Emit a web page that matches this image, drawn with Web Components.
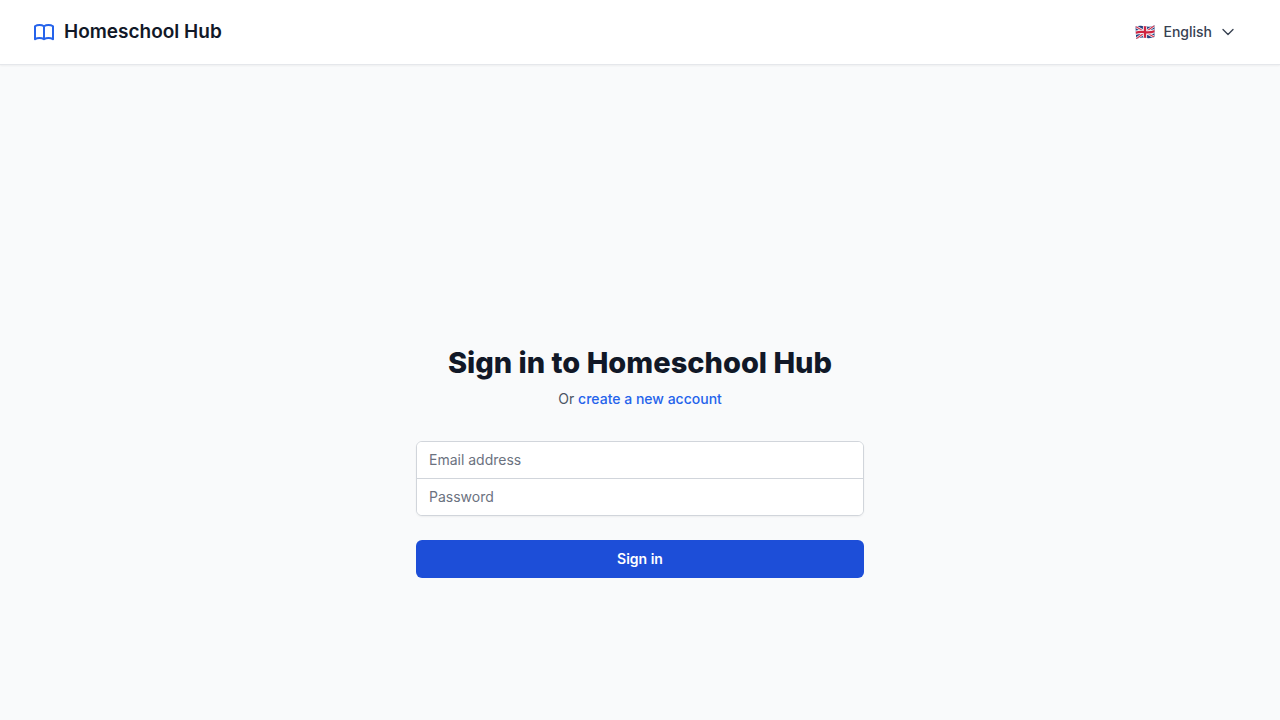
<!DOCTYPE html>
<html lang="en">
<head>
<meta charset="utf-8">
<meta name="viewport" content="width=device-width, initial-scale=1">
<title>Homeschool Hub</title>
<style>
  body { margin: 0; background: #f9fafb; color: #111827; font-family: Inter, "Liberation Sans", sans-serif; font-size: 14px; line-height: 20px; }
</style>
</head>
<body>
<hub-page>
  <hub-header slot="header">
    <hub-brand>Homeschool Hub</hub-brand>
    <language-picker slot="actions">English</language-picker>
  </hub-header>
  <sign-in-panel></sign-in-panel>
</hub-page>

<script>
function define(name, html) {
  const template = document.createElement('template');
  template.innerHTML = html;
  customElements.define(name, class extends HTMLElement {
    constructor() {
      super();
      this.attachShadow({ mode: 'open' }).append(template.content.cloneNode(true));
    }
  });
}

define('hub-page', `
  <style>
    :host { display: flex; flex-direction: column; min-height: 100vh; }
    main { flex: 1; display: flex; flex-direction: column; align-items: center; justify-content: flex-end; padding: 48px 32px 142px; }
  </style>
  <slot name="header"></slot>
  <main><slot></slot></main>
`);

define('hub-header', `
  <style>
    :host { display: block; background: #fff; border-bottom: 1px solid #e5e7eb; box-shadow: 0 1px 2px rgb(0 0 0 / .05); }
    header { display: flex; align-items: center; justify-content: space-between; height: 64px; padding: 0 32px; }
  </style>
  <header><slot></slot><slot name="actions"></slot></header>
`);

define('hub-brand', `
  <style>
    :host { display: block; }
    a { display: flex; align-items: center; gap: 8px; color: #111827; font-size: 19px; line-height: 28px; font-weight: 600; text-decoration: none; }
    svg { width: 24px; height: 24px; color: #2563eb; }
  </style>
  <a href="#"><svg viewBox="0 0 24 24" fill="none" stroke="currentColor" stroke-width="2" stroke-linecap="round" stroke-linejoin="round" aria-hidden="true"><path d="M12 6.253v13m0-13C10.832 5.477 9.246 5 7.5 5S4.168 5.477 3 6.253v13C4.168 18.477 5.754 18 7.5 18s3.332.477 4.5 1.253m0-13C13.168 5.477 14.754 5 16.5 5c1.747 0 3.332.477 4.5 1.253v13C19.832 18.477 18.247 18 16.5 18c-1.746 0-3.332.477-4.5 1.253"/></svg><span><slot></slot></span></a>
`);

define('language-picker', `
  <style>
    :host { display: block; }
    button { display: flex; align-items: center; gap: 8px; margin: 0; padding: 8px 12px; border: 0; border-radius: 6px; background: none; color: #374151; font: inherit; font-weight: 500; cursor: pointer; }
    .flag { width: 20px; height: 16px; }
    .chevron { width: 16px; height: 16px; }
  </style>
  <button type="button" aria-haspopup="listbox" aria-label="Language: English">
    <svg class="flag" viewBox="0 0 20 16" aria-hidden="true">
      <defs><clipPath id="cloth"><path d="M.5 2.500Q5 1 10 2.300T19.500 1.200V13Q15 14.800 10 13.800T1.200 15Z"/></clipPath></defs>
      <g clip-path="url(#cloth)">
        <path fill="#24407f" d="M0 0h20v16H0z"/>
        <path stroke="#f1f2f7" stroke-width="2.600" d="M.5 2.500l19 10.800M1 15l18.500-13.500"/>
        <path stroke="#d3324c" stroke-width="1.100" d="M.5 2.500l19 10.800M1 15l18.500-13.500"/>
        <path fill="none" stroke="#f1f2f7" stroke-width="4.200" d="M10 0v16M0 9Q5 7.300 10 8.200T20 7"/>
        <path fill="none" stroke="#cf2440" stroke-width="2.300" d="M10 0v16M0 9Q5 7.300 10 8.200T20 7"/>
      </g>
    </svg>
    <span><slot></slot></span>
    <svg class="chevron" viewBox="0 0 24 24" fill="none" stroke="currentColor" stroke-width="2" stroke-linecap="round" stroke-linejoin="round" aria-hidden="true"><path d="m19.500 8.250-7.500 7.500-7.500-7.500"/></svg>
  </button>
`);

define('sign-in-panel', `
  <style>
    :host { display: block; width: 100%; max-width: 448px; }
    h1 { margin: 0; font-size: 29px; line-height: 36px; font-weight: 800; text-align: center; }
    p { margin: 8px 0 0; color: #4b5563; text-align: center; }
    a { color: #2563eb; font-weight: 500; text-decoration: none; }
    form { display: flex; flex-direction: column; gap: 24px; margin-top: 32px; }
    .fields { border: 1px solid #d1d5db; border-radius: 6px; background: #fff; box-shadow: 0 1px 2px rgb(0 0 0 / .05); overflow: hidden; }
    input { display: block; box-sizing: border-box; width: 100%; margin: 0; padding: 7px 12px 9px; border: 0; background: #fff; color: #111827; font: inherit; outline-offset: -2px; height: 36px; }
    input + input { border-top: 1px solid #d1d5db; height: 37px; }
    input::placeholder { color: #6b7280; opacity: 1; }
    button { height: 38px; padding: 0 16px; border: 0; border-radius: 6px; background: #1d4ed8; color: #fff; font: inherit; font-weight: 600; cursor: pointer; }
  </style>
  <h1>Sign in to Homeschool Hub</h1>
  <p>Or <a href="#">create a new account</a></p>
  <form onsubmit="return false">
    <div class="fields">
      <input type="email" name="email" autocomplete="email" placeholder="Email address" aria-label="Email address">
      <input type="password" name="password" autocomplete="current-password" placeholder="Password" aria-label="Password">
    </div>
    <button type="submit">Sign in</button>
  </form>
`);
</script>
</body>
</html>
